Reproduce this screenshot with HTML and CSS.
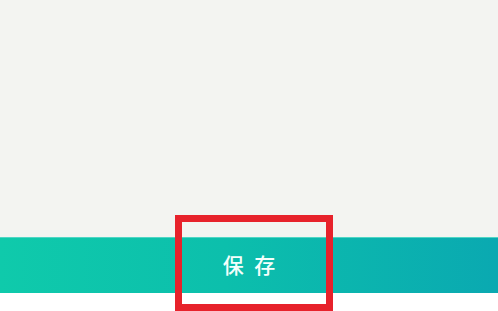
FILE: index.html
```html
<!DOCTYPE html>
<html lang="zh">
<head>
<meta charset="utf-8">
<link rel="stylesheet" href="styles.css">
</head>
<body>
<div class="page">
  <div class="content"></div>
  <div class="savebar"><span class="label">保 存</span></div>
  <div class="footer"></div>
  <div class="highlight"></div>
</div>
</body>
</html>
```
FILE: styles.css
```css
html, body {
  margin: 0;
  padding: 0;
}
body {
  width: 498px;
  height: 311px;
  overflow: hidden;
  background: #f3f4f1;
  font-family: "Noto Sans CJK SC", "Noto Sans", sans-serif;
}
.page {
  position: relative;
  display: flex;
  flex-direction: column;
  height: 311px;
}
.content {
  height: 237px;
  background: #f3f4f1;
}
.savebar {
  height: 56px;
  background: linear-gradient(90deg, #0fcaab 0%, #0cbfac 45%, #0aa9b1 100%);
  display: flex;
  align-items: center;
  justify-content: center;
  box-shadow: inset 0 1px 0 #4fd6c4;
}
.label {
  color: #f4fffc;
  font-size: 21px;
  font-weight: 500;
  letter-spacing: 3px;
  margin-left: 3px;
  margin-top: -2px;
}
.footer {
  flex: 1;
  background: #ffffff;
}
.highlight {
  position: absolute;
  left: 175px;
  top: 215px;
  width: 144px;
  height: 82px;
  border: 7px solid #e7222b;
}
```
